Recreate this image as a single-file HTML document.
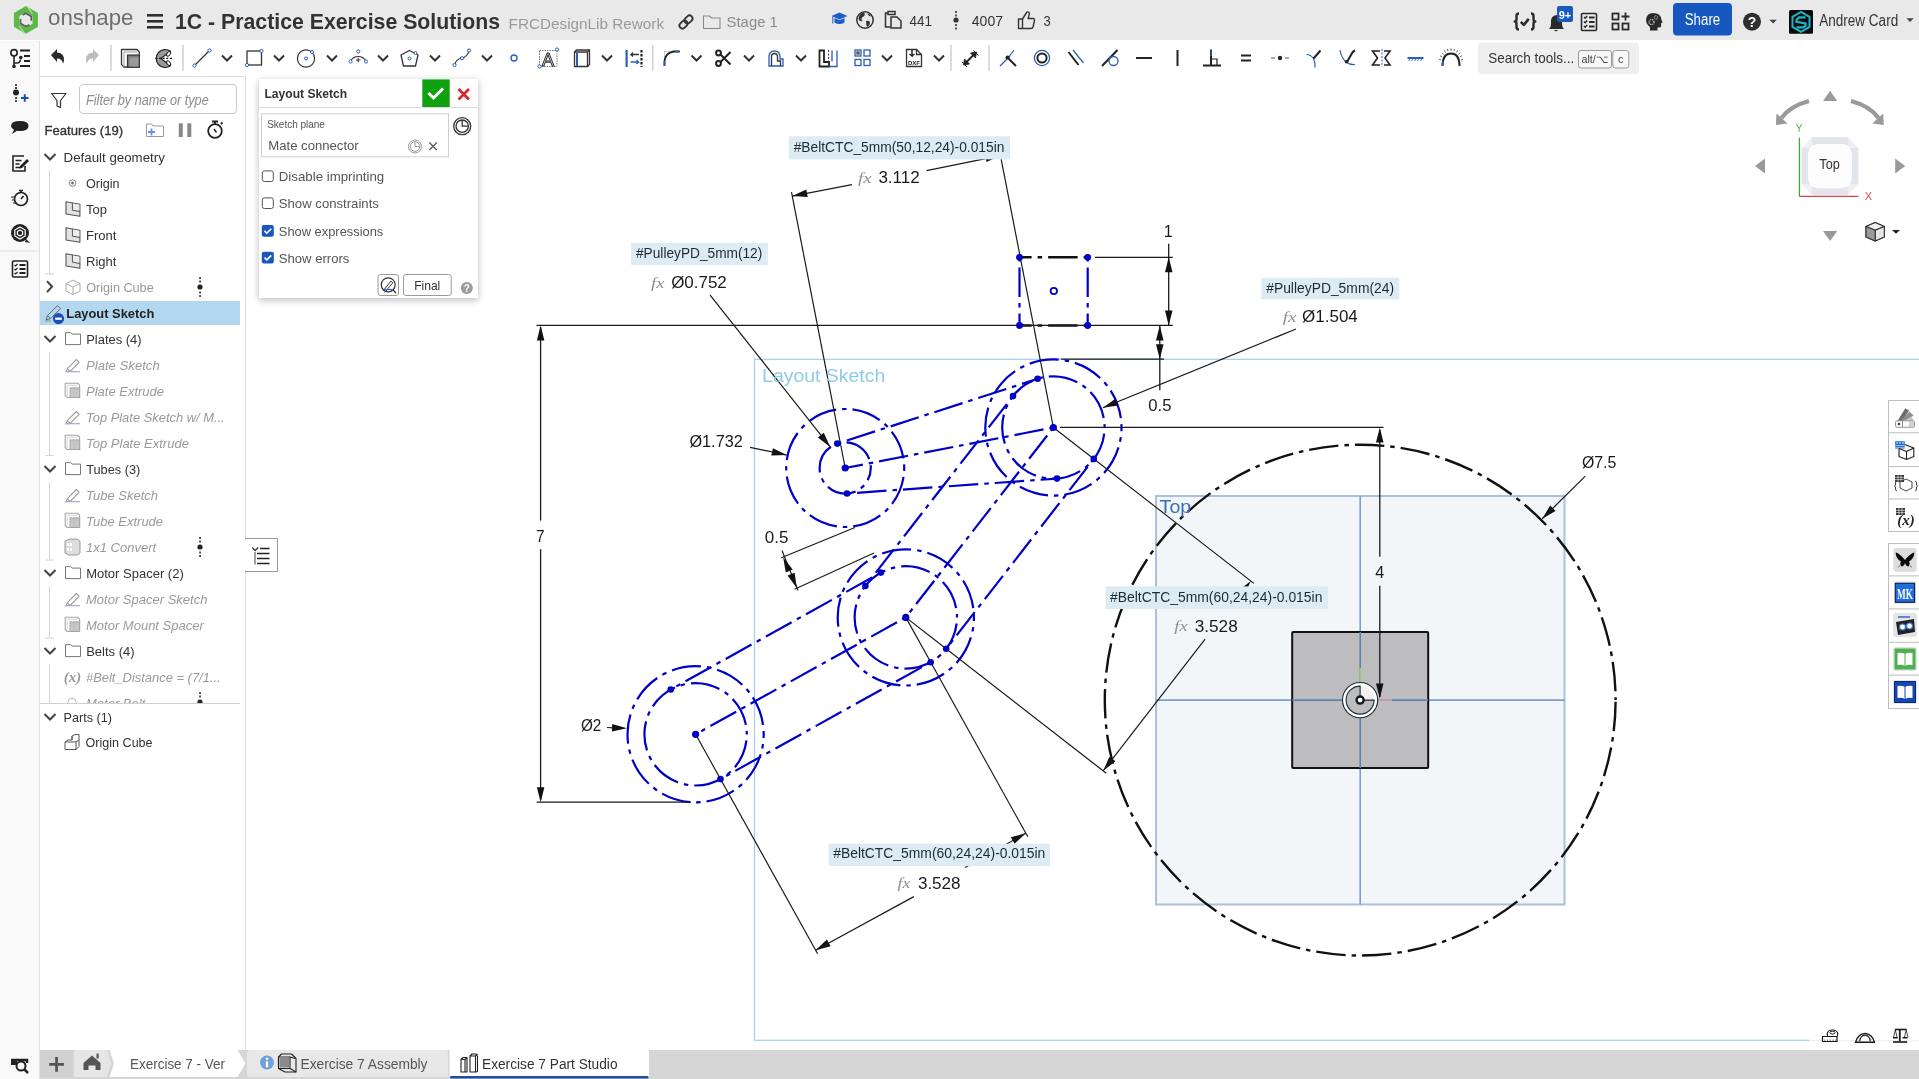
<!DOCTYPE html>
<html><head><meta charset="utf-8"><title>Onshape</title>
<style>
html,body{margin:0;padding:0;}
body{width:1919px;height:1079px;overflow:hidden;position:relative;background:#fff;font-family:"Liberation Sans",sans-serif;color:#333;}
#sketch{position:absolute;left:0;top:0;}
.abs{position:absolute;}
#header{position:absolute;left:0;top:0;width:1919px;height:40px;background:#e9e9e9;}
#toolbar{position:absolute;left:0;top:40px;width:1919px;height:36px;background:#fff;}
#leftstrip{position:absolute;left:0;top:41px;width:39px;height:1038px;background:#f9f9f9;border-right:1px solid #e0e0e0;}
#panel{position:absolute;left:40px;top:76px;width:205px;height:973px;background:#fff;border-right:1px solid #dcdcdc;border-top:1px solid #dcdcdc;}
#bottombar{position:absolute;left:40px;top:1050px;width:1879px;height:29px;background:#d6d6d6;}
.dimt{position:absolute;font-size:17px;color:#1a1a1a;line-height:1;white-space:nowrap;}
.expr{position:absolute;background:#dcebf4;color:#1e2a33;font-size:14px;line-height:23px;height:23px;border-radius:3px;white-space:nowrap;text-align:center;}
.fx{font-family:"Liberation Serif",serif;font-style:italic;color:#8a8a8a;font-size:15px;}
#overlay{position:absolute;left:0;top:0;pointer-events:none;will-change:transform;}
#sketch{will-change:transform;}

</style></head>
<body>
<svg id="sketch" width="1919" height="1079" viewBox="0 0 1919 1079">
<rect x="754.5" y="359.3" width="1200" height="681" fill="none" stroke="#9fd0ee" stroke-width="1.2"/>
<rect x="1156" y="496" width="408.5" height="408.5" fill="#f2f6f9" stroke="#a9c1dc" stroke-width="2"/>
<line x1="1360.2" y1="496" x2="1360.2" y2="904.5" stroke="#7f9fc8" stroke-width="1.6"/>
<line x1="1156" y1="700.1" x2="1564.5" y2="700.1" stroke="#7f9fc8" stroke-width="1.6"/>
<rect x="1292.2" y="632" width="136" height="136" fill="#bdbdbf" stroke="#111" stroke-width="2" rx="1"/>
<line x1="1360.2" y1="632" x2="1360.2" y2="768" stroke="#5c82b0" stroke-width="1.6"/>
<line x1="1292.2" y1="700.1" x2="1428.2" y2="700.1" stroke="#5c82b0" stroke-width="1.6"/>
<line x1="1360.2" y1="668" x2="1360.2" y2="684" stroke="#9ccc66" stroke-width="1.6"/>
<line x1="1377" y1="700.1" x2="1392" y2="700.1" stroke="#d9a0a8" stroke-width="1.6"/>
<circle cx="1360.1" cy="700.1" r="17.6" fill="#fff" stroke="#1e2a36" stroke-width="1.1"/>
<path d="M1360.1,686.1 A14,14 0 0 1 1374.1,700.1 L1360.1,700.1 Z" fill="#f2efef"/>
<path d="M1360.1,686.1 A14,14 0 1 0 1374.1,700.1 L1360.1,700.1 Z" fill="#bdbdbf" stroke="#1e2a36" stroke-width="1.1"/>
<circle cx="1360.1" cy="700.1" r="3.6" fill="#fff" stroke="#0d1620" stroke-width="2.3"/>
<circle cx="1360.2" cy="700.1" r="255.4" fill="none" stroke="#111" stroke-width="2.4" stroke-dasharray="29.5 6 4.5 6" stroke-dashoffset="44.3"/>
<circle cx="845.2" cy="468.0" r="25.6" fill="none" stroke="#0000c8" stroke-width="2.2" stroke-dasharray="29.5 6 4.5 6" stroke-dashoffset="16.72"/>
<circle cx="845.2" cy="468.0" r="59.0" fill="none" stroke="#0000c8" stroke-width="2.2" stroke-dasharray="29.5 6 4.5 6" stroke-dashoffset="37.05"/>
<circle cx="1053.4" cy="427.5" r="51.2" fill="none" stroke="#0000c8" stroke-width="2.2" stroke-dasharray="29.5 6 4.5 6" stroke-dashoffset="39.83"/>
<circle cx="1053.4" cy="427.5" r="68.1" fill="none" stroke="#0000c8" stroke-width="2.2" stroke-dasharray="29.5 6 4.5 6" stroke-dashoffset="25.72"/>
<circle cx="905.8" cy="617.4" r="51.2" fill="none" stroke="#0000c8" stroke-width="2.2" stroke-dasharray="29.5 6 4.5 6" stroke-dashoffset="39.83"/>
<circle cx="905.8" cy="617.4" r="68.1" fill="none" stroke="#0000c8" stroke-width="2.2" stroke-dasharray="29.5 6 4.5 6" stroke-dashoffset="25.72"/>
<circle cx="695.6" cy="734.3" r="51.2" fill="none" stroke="#0000c8" stroke-width="2.2" stroke-dasharray="29.5 6 4.5 6" stroke-dashoffset="39.83"/>
<circle cx="695.6" cy="734.3" r="68.1" fill="none" stroke="#0000c8" stroke-width="2.2" stroke-dasharray="29.5 6 4.5 6" stroke-dashoffset="25.72"/>
<line x1="1053.4" y1="427.5" x2="845.2" y2="468.0" stroke="#0000c8" stroke-width="2.2" stroke-dasharray="29.5 6 4.5 6" stroke-dashoffset="35.9"/>
<line x1="1053.4" y1="427.5" x2="905.8" y2="617.4" stroke="#0000c8" stroke-width="2.2" stroke-dasharray="29.5 6 4.5 6" stroke-dashoffset="35.9"/>
<line x1="905.8" y1="617.4" x2="695.6" y2="734.3" stroke="#0000c8" stroke-width="2.2" stroke-dasharray="29.5 6 4.5 6" stroke-dashoffset="35.9"/>
<line x1="847.0" y1="493.5" x2="1057.0" y2="478.6" stroke="#0000c8" stroke-width="2.2" stroke-dasharray="29.5 6 4.5 6" stroke-dashoffset="35.9"/>
<line x1="837.3" y1="443.6" x2="1037.6" y2="378.8" stroke="#0000c8" stroke-width="2.2" stroke-dasharray="29.5 6 4.5 6" stroke-dashoffset="35.9"/>
<line x1="1013.0" y1="396.1" x2="865.4" y2="586.0" stroke="#0000c8" stroke-width="2.2" stroke-dasharray="29.5 6 4.5 6" stroke-dashoffset="35.9"/>
<line x1="1093.8" y1="458.9" x2="946.2" y2="648.8" stroke="#0000c8" stroke-width="2.2" stroke-dasharray="29.5 6 4.5 6" stroke-dashoffset="35.9"/>
<line x1="880.9" y1="572.6" x2="670.7" y2="689.5" stroke="#0000c8" stroke-width="2.2" stroke-dasharray="29.5 6 4.5 6" stroke-dashoffset="35.9"/>
<line x1="930.7" y1="662.2" x2="720.5" y2="779.1" stroke="#0000c8" stroke-width="2.2" stroke-dasharray="29.5 6 4.5 6" stroke-dashoffset="35.9"/>
<line x1="1087.7" y1="257.3" x2="1019.5" y2="257.3" stroke="#111" stroke-width="2.4" stroke-dasharray="29.5 6 4.5 6" stroke-dashoffset="35.9"/>
<line x1="1087.7" y1="325.5" x2="1019.5" y2="325.5" stroke="#111" stroke-width="2.4" stroke-dasharray="29.5 6 4.5 6" stroke-dashoffset="35.9"/>
<line x1="1019.5" y1="257.3" x2="1019.5" y2="325.5" stroke="#0000c8" stroke-width="2.2" stroke-dasharray="29.5 6 4.5 6" stroke-dashoffset="35.9"/>
<line x1="1087.7" y1="257.3" x2="1087.7" y2="325.5" stroke="#0000c8" stroke-width="2.2" stroke-dasharray="29.5 6 4.5 6" stroke-dashoffset="35.9"/>
<circle cx="1053.8" cy="291" r="3.2" fill="none" stroke="#0000c8" stroke-width="1.8"/>
<line x1="536.5" y1="325.4" x2="1172.8" y2="325.4" stroke="#1a1a1a" stroke-width="1.3"/>
<line x1="1095.0" y1="257.3" x2="1172.8" y2="257.3" stroke="#1a1a1a" stroke-width="1.3"/>
<line x1="536.7" y1="802.2" x2="691.0" y2="802.2" stroke="#1a1a1a" stroke-width="1.3"/>
<line x1="1061.0" y1="359.2" x2="1164.0" y2="359.2" stroke="#1a1a1a" stroke-width="1.3"/>
<line x1="1060.0" y1="427.4" x2="1383.6" y2="427.4" stroke="#1a1a1a" stroke-width="1.3"/>
<line x1="540.6" y1="327.0" x2="540.6" y2="520.6" stroke="#1a1a1a" stroke-width="1.3"/>
<line x1="540.6" y1="549.2" x2="540.6" y2="800.0" stroke="#1a1a1a" stroke-width="1.3"/>
<polygon points="540.6,325.4 544.4,340.4 536.9,340.4" fill="#111"/>
<polygon points="540.6,802.2 536.9,787.2 544.4,787.2" fill="#111"/>
<line x1="1168.7" y1="243.7" x2="1168.7" y2="325.4" stroke="#1a1a1a" stroke-width="1.3"/>
<polygon points="1168.7,257.3 1172.5,272.3 1165.0,272.3" fill="#111"/>
<polygon points="1168.7,325.4 1165.0,310.4 1172.5,310.4" fill="#111"/>
<line x1="1159.8" y1="325.4" x2="1159.8" y2="390.2" stroke="#1a1a1a" stroke-width="1.3"/>
<polygon points="1159.8,325.4 1163.5,340.4 1156.0,340.4" fill="#111"/>
<polygon points="1159.8,359.2 1156.0,344.2 1163.5,344.2" fill="#111"/>
<line x1="1379.8" y1="430.0" x2="1379.8" y2="556.8" stroke="#1a1a1a" stroke-width="1.3"/>
<line x1="1379.8" y1="585.7" x2="1379.8" y2="697.0" stroke="#1a1a1a" stroke-width="1.3"/>
<polygon points="1379.8,427.4 1383.5,442.4 1376.0,442.4" fill="#111"/>
<polygon points="1379.8,698.5 1376.0,683.5 1383.5,683.5" fill="#111"/>
<line x1="845.2" y1="468.0" x2="791.5" y2="192.2" stroke="#1a1a1a" stroke-width="1.2"/>
<line x1="1053.4" y1="427.5" x2="999.7" y2="151.7" stroke="#1a1a1a" stroke-width="1.2"/>
<polygon points="792.3,196.1 806.3,189.6 807.7,196.9" fill="#111"/>
<polygon points="1000.5,155.6 986.5,162.1 985.1,154.8" fill="#111"/>
<line x1="792.3" y1="196.1" x2="852.0" y2="184.6" stroke="#1a1a1a" stroke-width="1.2"/>
<line x1="926.5" y1="170.6" x2="1000.5" y2="155.6" stroke="#1a1a1a" stroke-width="1.2"/>
<polygon points="830.2,446.9 817.9,437.5 823.8,432.8" fill="#111"/>
<line x1="710.1" y1="295.2" x2="830.2" y2="446.9" stroke="#1a1a1a" stroke-width="1.2"/>
<polygon points="786.8,455.1 771.3,455.6 772.9,448.3" fill="#111"/>
<line x1="750.1" y1="447.3" x2="786.8" y2="455.1" stroke="#1a1a1a" stroke-width="1.2"/>
<polygon points="1102.9,407.8 1115.4,398.7 1118.2,405.6" fill="#111"/>
<line x1="1296.0" y1="329.0" x2="1102.9" y2="407.8" stroke="#1a1a1a" stroke-width="1.2"/>
<polygon points="1542.2,518.8 1550.2,505.6 1555.5,510.9" fill="#111"/>
<line x1="1585.3" y1="476.1" x2="1542.2" y2="518.8" stroke="#1a1a1a" stroke-width="1.2"/>
<line x1="781.3" y1="557.8" x2="855.0" y2="527.5" stroke="#1a1a1a" stroke-width="1.2"/>
<line x1="794.5" y1="589.2" x2="874.0" y2="553.0" stroke="#1a1a1a" stroke-width="1.2"/>
<line x1="782.0" y1="550.5" x2="798.0" y2="590.5" stroke="#1a1a1a" stroke-width="1.2"/>
<polygon points="783.2,557.4 792.7,569.6 785.8,572.6" fill="#111"/>
<polygon points="796.8,588.0 787.6,575.6 794.6,572.7" fill="#111"/>
<line x1="1053.4" y1="427.5" x2="1253.9" y2="583.4" stroke="#1a1a1a" stroke-width="1.2"/>
<line x1="905.8" y1="617.4" x2="1106.3" y2="773.3" stroke="#1a1a1a" stroke-width="1.2"/>
<polygon points="1103.2,770.8 1109.4,756.7 1115.4,761.3" fill="#111"/>
<polygon points="1250.8,580.9 1244.5,595.1 1238.6,590.5" fill="#111"/>
<line x1="1103.2" y1="770.8" x2="1205.1" y2="639.2" stroke="#1a1a1a" stroke-width="1.2"/>
<line x1="905.8" y1="617.4" x2="1027.8" y2="836.8" stroke="#1a1a1a" stroke-width="1.2"/>
<line x1="695.6" y1="734.3" x2="817.6" y2="953.7" stroke="#1a1a1a" stroke-width="1.2"/>
<polygon points="815.6,950.2 826.9,939.6 830.6,946.2" fill="#111"/>
<polygon points="1025.8,833.3 1014.6,843.8 1010.9,837.3" fill="#111"/>
<line x1="815.6" y1="950.2" x2="913.8" y2="896.6" stroke="#1a1a1a" stroke-width="1.2"/>
<line x1="965.0" y1="867.4" x2="1025.8" y2="833.3" stroke="#1a1a1a" stroke-width="1.2"/>
<polygon points="627.0,728.3 611.9,731.4 612.2,724.0" fill="#111"/>
<line x1="607.0" y1="727.5" x2="614.0" y2="727.8" stroke="#1a1a1a" stroke-width="1.2"/>
<circle cx="847.0" cy="493.5" r="3.3" fill="#0000c8"/>
<circle cx="1057.0" cy="478.6" r="3.3" fill="#0000c8"/>
<circle cx="837.3" cy="443.6" r="3.3" fill="#0000c8"/>
<circle cx="1037.6" cy="378.8" r="3.3" fill="#0000c8"/>
<circle cx="1013.0" cy="396.1" r="3.3" fill="#0000c8"/>
<circle cx="865.4" cy="586.0" r="3.3" fill="#0000c8"/>
<circle cx="1093.8" cy="458.9" r="3.3" fill="#0000c8"/>
<circle cx="946.2" cy="648.8" r="3.3" fill="#0000c8"/>
<circle cx="880.9" cy="572.6" r="3.3" fill="#0000c8"/>
<circle cx="670.7" cy="689.5" r="3.3" fill="#0000c8"/>
<circle cx="930.7" cy="662.2" r="3.3" fill="#0000c8"/>
<circle cx="720.5" cy="779.1" r="3.3" fill="#0000c8"/>
<circle cx="845.2" cy="468.0" r="3.6" fill="#0000c8"/>
<circle cx="1053.4" cy="427.5" r="3.6" fill="#0000c8"/>
<circle cx="905.8" cy="617.4" r="3.6" fill="#0000c8"/>
<circle cx="695.6" cy="734.3" r="3.6" fill="#0000c8"/>
<circle cx="1019.5" cy="257.3" r="3.4" fill="#0000c8"/>
<circle cx="1087.7" cy="257.3" r="3.4" fill="#0000c8"/>
<circle cx="1019.5" cy="325.5" r="3.4" fill="#0000c8"/>
<circle cx="1087.7" cy="325.5" r="3.4" fill="#0000c8"/>
<text x="762.1" y="381.5" font-family="Liberation Sans, sans-serif" font-size="17.5" fill="#8fcbea" font-style="normal" font-weight="normal" text-anchor="start" textLength="123.2" lengthAdjust="spacingAndGlyphs">Layout Sketch</text>
<text x="1159.6" y="513.4" font-family="Liberation Sans, sans-serif" font-size="18" fill="#3a6db5" font-style="normal" font-weight="normal" text-anchor="start" textLength="31.6" lengthAdjust="spacingAndGlyphs">Top</text>
<rect x="789" y="136.3" width="221.0" height="23.1" fill="#dcebf4"/>
<text x="793.7" y="151.6" font-family="Liberation Sans, sans-serif" font-size="14" fill="#1e2a33" font-style="normal" font-weight="normal" text-anchor="start" textLength="210.7" lengthAdjust="spacingAndGlyphs">#BeltCTC_5mm(50,12,24)-0.015in</text>
<text x="858" y="182.5" font-family="Liberation Serif, sans-serif" font-size="15" fill="#8f8f8f" font-style="italic" font-weight="normal" text-anchor="start" textLength="13.6" lengthAdjust="spacingAndGlyphs">fx</text>
<text x="878.4" y="182.8" font-family="Liberation Sans, sans-serif" font-size="16" fill="#1a1a1a" font-style="normal" font-weight="normal" text-anchor="start" textLength="41.3" lengthAdjust="spacingAndGlyphs">3.112</text>
<rect x="631.1" y="242.9" width="136.8" height="22.2" fill="#dcebf4"/>
<text x="636" y="257.8" font-family="Liberation Sans, sans-serif" font-size="14" fill="#1e2a33" font-style="normal" font-weight="normal" text-anchor="start" textLength="126.3" lengthAdjust="spacingAndGlyphs">#PulleyPD_5mm(12)</text>
<text x="651" y="287.5" font-family="Liberation Serif, sans-serif" font-size="15" fill="#8f8f8f" font-style="italic" font-weight="normal" text-anchor="start" textLength="13.5" lengthAdjust="spacingAndGlyphs">fx</text>
<text x="671.2" y="288.3" font-family="Liberation Sans, sans-serif" font-size="16" fill="#1a1a1a" font-style="normal" font-weight="normal" text-anchor="start" textLength="55.6" lengthAdjust="spacingAndGlyphs">Ø0.752</text>
<text x="689.4" y="446.9" font-family="Liberation Sans, sans-serif" font-size="16" fill="#1a1a1a" font-style="normal" font-weight="normal" text-anchor="start" textLength="53.4" lengthAdjust="spacingAndGlyphs">Ø1.732</text>
<text x="1168.3" y="237" font-family="Liberation Sans, sans-serif" font-size="16" fill="#1a1a1a" font-style="normal" font-weight="normal" text-anchor="middle">1</text>
<text x="1148.3" y="410.5" font-family="Liberation Sans, sans-serif" font-size="16" fill="#1a1a1a" font-style="normal" font-weight="normal" text-anchor="start" textLength="23.2" lengthAdjust="spacingAndGlyphs">0.5</text>
<text x="536.1" y="541.7" font-family="Liberation Sans, sans-serif" font-size="16" fill="#1a1a1a" font-style="normal" font-weight="normal" text-anchor="start" textLength="8.6" lengthAdjust="spacingAndGlyphs">7</text>
<text x="764.8" y="543" font-family="Liberation Sans, sans-serif" font-size="16" fill="#1a1a1a" font-style="normal" font-weight="normal" text-anchor="start" textLength="23.7" lengthAdjust="spacingAndGlyphs">0.5</text>
<rect x="1261.3" y="277.8" width="138.0" height="21.5" fill="#dcebf4"/>
<text x="1266.2" y="292.6" font-family="Liberation Sans, sans-serif" font-size="14" fill="#1e2a33" font-style="normal" font-weight="normal" text-anchor="start" textLength="127.9" lengthAdjust="spacingAndGlyphs">#PulleyPD_5mm(24)</text>
<text x="1282.8" y="321.5" font-family="Liberation Serif, sans-serif" font-size="15" fill="#8f8f8f" font-style="italic" font-weight="normal" text-anchor="start" textLength="13.8" lengthAdjust="spacingAndGlyphs">fx</text>
<text x="1302.1" y="322.3" font-family="Liberation Sans, sans-serif" font-size="16" fill="#1a1a1a" font-style="normal" font-weight="normal" text-anchor="start" textLength="55.7" lengthAdjust="spacingAndGlyphs">Ø1.504</text>
<text x="1375.3" y="578.4" font-family="Liberation Sans, sans-serif" font-size="16" fill="#1a1a1a" font-style="normal" font-weight="normal" text-anchor="start" textLength="9" lengthAdjust="spacingAndGlyphs">4</text>
<text x="1581.9" y="467.8" font-family="Liberation Sans, sans-serif" font-size="16" fill="#1a1a1a" font-style="normal" font-weight="normal" text-anchor="start" textLength="34.5" lengthAdjust="spacingAndGlyphs">Ø7.5</text>
<text x="580.9" y="730.8" font-family="Liberation Sans, sans-serif" font-size="16" fill="#1a1a1a" font-style="normal" font-weight="normal" text-anchor="start" textLength="20.4" lengthAdjust="spacingAndGlyphs">Ø2</text>
<rect x="1105.6" y="586.4" width="222.4" height="22.6" fill="#dcebf4"/>
<text x="1110" y="601.8" font-family="Liberation Sans, sans-serif" font-size="14" fill="#1e2a33" font-style="normal" font-weight="normal" text-anchor="start" textLength="212.4" lengthAdjust="spacingAndGlyphs">#BeltCTC_5mm(60,24,24)-0.015in</text>
<text x="1174.3" y="630.8" font-family="Liberation Serif, sans-serif" font-size="15" fill="#8f8f8f" font-style="italic" font-weight="normal" text-anchor="start" textLength="13.3" lengthAdjust="spacingAndGlyphs">fx</text>
<text x="1194.8" y="631.5" font-family="Liberation Sans, sans-serif" font-size="16" fill="#1a1a1a" font-style="normal" font-weight="normal" text-anchor="start" textLength="42.9" lengthAdjust="spacingAndGlyphs">3.528</text>
<rect x="828.5" y="843.7" width="221.5" height="22.4" fill="#dcebf4"/>
<text x="833.2" y="858.2" font-family="Liberation Sans, sans-serif" font-size="14" fill="#1e2a33" font-style="normal" font-weight="normal" text-anchor="start" textLength="212.1" lengthAdjust="spacingAndGlyphs">#BeltCTC_5mm(60,24,24)-0.015in</text>
<text x="897.6" y="888.4" font-family="Liberation Serif, sans-serif" font-size="15" fill="#8f8f8f" font-style="italic" font-weight="normal" text-anchor="start" textLength="12.8" lengthAdjust="spacingAndGlyphs">fx</text>
<text x="917.9" y="889.1" font-family="Liberation Sans, sans-serif" font-size="16" fill="#1a1a1a" font-style="normal" font-weight="normal" text-anchor="start" textLength="42.7" lengthAdjust="spacingAndGlyphs">3.528</text>
</svg>
<div id="header"></div>
<div id="toolbar"></div>
<div id="leftstrip"></div>
<div id="panel"></div>
<div id="bottombar"></div>

<div style="position:absolute;left:258.5px;top:79.4px;width:219.3px;height:218.8px;background:#fff;box-shadow:0 2px 7px rgba(0,0,0,0.28);"></div>
<div style="position:absolute;left:1888px;top:400px;width:31px;height:132px;background:#fff;border:1px solid #bdbdbd;border-right:none;box-sizing:border-box;"></div>
<div style="position:absolute;left:1888px;top:543px;width:31px;height:166px;background:#fff;border:1px solid #bdbdbd;border-right:none;box-sizing:border-box;"></div>
<svg id="overlay" width="1919" height="1079" viewBox="0 0 1919 1079">
<g transform="translate(25.9,19.9)">
<polygon points="0,-13.8 12,-6.9 12,6.9 0,13.8 -12,6.9 -12,-6.9" fill="#5db847"/>
<polygon points="0,-7.6 6.6,-3.8 6.6,3.8 0,7.6 -6.6,3.8 -6.6,-3.8" fill="#e9e9e9"/>
<path d="M1.5,-13.5 L6.5,-6.2 M-1.5,13.5 L-6.5,6.2" stroke="#b8e0a8" stroke-width="1.1"/>
<path d="M-3.2,-4.9 L0,-6.6 L5.4,-3.5 L5.4,0.8 M3.5,4.9 L0,6.6 L-5.4,3.5 L-5.4,-0.8" fill="none" stroke="#5a5a5a" stroke-width="1.7"/>
</g>
<text x="48" y="25.3" font-family="Liberation Sans, sans-serif" font-size="22" fill="#6e6e6e" font-weight="normal" font-style="normal" text-anchor="start" textLength="85.5" lengthAdjust="spacingAndGlyphs" >onshape</text>
<g fill="#2e2e2e"><rect x="147" y="14" width="16" height="2.6"/><rect x="147" y="20" width="16" height="2.6"/><rect x="147" y="26" width="16" height="2.6"/></g>
<text x="175" y="29.1" font-family="Liberation Sans, sans-serif" font-size="22" fill="#333" font-weight="bold" font-style="normal" text-anchor="start" textLength="325" lengthAdjust="spacingAndGlyphs" >1C - Practice Exercise Solutions</text>
<text x="508.6" y="28.9" font-family="Liberation Sans, sans-serif" font-size="15" fill="#9a9a9a" font-weight="normal" font-style="normal" text-anchor="start" textLength="155.5" lengthAdjust="spacingAndGlyphs" >FRCDesignLib Rework</text>
<g transform="translate(686,22) rotate(-45)" fill="none" stroke="#333" stroke-width="1.8"><rect x="-8" y="-3" width="9" height="6" rx="3"/><rect x="-1" y="-3" width="9" height="6" rx="3"/></g>
<path d="M703.5,16 h6 l2,2 h8.5 v10.5 h-16.5 z" fill="none" stroke="#8a8a8a" stroke-width="1.1"/>
<text x="726.6" y="27.3" font-family="Liberation Sans, sans-serif" font-size="15" fill="#8a8a8a" font-weight="normal" font-style="normal" text-anchor="start" textLength="51.2" lengthAdjust="spacingAndGlyphs" >Stage 1</text>
<g fill="#1a5fc9"><polygon points="831.5,16 839.5,12.5 847.5,16 839.5,19.5"/><path d="M834.5,18 v4.5 q5,3 10,0 v-4.5 l-5,2.2 z"/><rect x="832.3" y="16.5" width="1" height="7"/></g>
<g><circle cx="865" cy="20" r="8.2" fill="none" stroke="#333" stroke-width="1.5"/><path d="M859.5,15 q3,-3 5,-2 q1,3 -2,4 q-2,2 0,4 q-3,1 -4,-2 z M866,21 q3,-1 4,1 q0,4 -3,5 q-1,-3 -1,-6 z M867,13.5 q3,0 4,3 q-2,0 -4,-3z" fill="#333"/></g>
<g fill="none" stroke="#333" stroke-width="1.5"><path d="M889,13 h-3.5 v14 h5"/><rect x="888" y="11.5" width="7" height="3" fill="#e9e9e9"/><path d="M891,17 h6 l4,4 v7 h-10 z"/></g>
<text x="909.6" y="26.2" font-family="Liberation Sans, sans-serif" font-size="15" fill="#333" font-weight="normal" font-style="normal" text-anchor="start" textLength="22.4" lengthAdjust="spacingAndGlyphs" >441</text>
<g fill="#333"><circle cx="956" cy="20" r="2.6"/><rect x="955.2" y="11" width="1.6" height="2"/><rect x="955.2" y="14.5" width="1.6" height="2"/><rect x="955.2" y="24" width="1.6" height="2"/><rect x="955.2" y="27.5" width="1.6" height="2"/></g>
<text x="971.8" y="26.2" font-family="Liberation Sans, sans-serif" font-size="15" fill="#333" font-weight="normal" font-style="normal" text-anchor="start" textLength="31.2" lengthAdjust="spacingAndGlyphs" >4007</text>
<path d="M1018.5,19 h4 v9.5 h-4 z M1022.5,19 l3.5,-5.5 q1,-2.5 2.8,-1.2 q1,1 0,4 l-0.8,2.2 h5 q1.8,0.2 1.5,2 l-1.5,6.5 q-0.5,1.5 -2,1.5 h-8.5" fill="none" stroke="#333" stroke-width="1.4" stroke-linejoin="round"/>
<text x="1043.4" y="26.2" font-family="Liberation Sans, sans-serif" font-size="15" fill="#333" font-weight="normal" font-style="normal" text-anchor="start" textLength="7.2" lengthAdjust="spacingAndGlyphs" >3</text>
<g fill="none" stroke="#2a2a2a" stroke-width="2.4" stroke-linejoin="round"><path d="M1519,13.5 q-2.5,0 -2.5,2.5 v3.5 q0,1.8 -1.8,2 q1.8,0.2 1.8,2 v3.5 q0,2.5 2.5,2.5"/><path d="M1531,13.5 q2.5,0 2.5,2.5 v3.5 q0,1.8 1.8,2 q-1.8,0.2 -1.8,2 v3.5 q0,2.5 -2.5,2.5"/><path d="M1520.8,21.8 l3,3 l5,-6" stroke-width="2.6"/></g>
<path d="M1549,29 q2,-1.5 2,-5 v-3 q0,-5 5.5,-6 q5.5,1 5.5,6 v3 q0,3.5 2,5 z M1554,30 q2,2.5 4,0z" fill="#2a2a2a"/>
<rect x="1557" y="6" width="16" height="16" rx="2" fill="#1a5bc0"/>
<text x="1565" y="18.5" font-family="Liberation Sans, sans-serif" font-size="11" fill="#fff" font-weight="bold" font-style="normal" text-anchor="middle" >9+</text>
<g fill="none" stroke="#2a2a2a" stroke-width="1.6"><rect x="1581.5" y="13.5" width="15" height="17" rx="1"/></g><g stroke="#2a2a2a" stroke-width="1.5" fill="none"><path d="M1584,17 l1.2,1.2 l2,-2.2 M1584,21.5 l1.2,1.2 l2,-2.2 M1584,26 l1.2,1.2 l2,-2.2"/><path d="M1589,17.5 h5.5 M1589,22 h5.5 M1589,26.5 h5.5" stroke-width="2"/></g>
<g fill="none" stroke="#2a2a2a" stroke-width="1.8"><rect x="1612.5" y="13.5" width="6" height="6"/><rect x="1612.5" y="23.5" width="6" height="6"/><rect x="1622.5" y="23.5" width="6" height="6"/><path d="M1625.5,12.5 v8 M1621.5,16.5 h8"/></g>
<path d="M1653,13 q8,0 8.5,7 l1.2,2.5 l-1.6,0.5 v3 q0,1.5 -2,1.5 h-1.6 v3 h-7.5 v-3.5 q-4,-3 -4,-7 q0.5,-7 7,-7z" fill="#2a2a2a"/><circle cx="1651.5" cy="22" r="2.5" fill="none" stroke="#ccc" stroke-width="1.2" stroke-dasharray="1.2 0.8"/><circle cx="1656" cy="17.5" r="1.8" fill="none" stroke="#ccc" stroke-width="1" stroke-dasharray="1 0.7"/>
<rect x="1673" y="3" width="59" height="32.6" rx="4" fill="#1658c0"/>
<text x="1702.5" y="25.3" font-family="Liberation Sans, sans-serif" font-size="16" fill="#fff" font-weight="normal" font-style="normal" text-anchor="middle" textLength="35.5" lengthAdjust="spacingAndGlyphs" >Share</text>
<circle cx="1752" cy="21.7" r="9" fill="#2e2e2e"/>
<text x="1752" y="27" font-family="Liberation Sans, sans-serif" font-size="14" fill="#fff" font-weight="bold" font-style="normal" text-anchor="middle" >?</text>
<polygon points="1769.4,19.7 1776.8,19.7 1773.1,23.6" fill="#444"/>
<rect x="1789" y="10" width="24" height="23.8" rx="1.5" fill="#0b0b0b"/><g transform="translate(1801,21.9)"><polygon points="0,-10 8.5,-5 8.5,5 0,10 -8.5,5 -8.5,-5" fill="none" stroke="#1fb3c7" stroke-width="2"/><path d="M4.5,-4.5 L-2,-4.5 L-4.5,-2 L-4.5,0 L4.5,1.5 L4.5,4 L2,5.5 L-4.5,5.5" fill="none" stroke="#1fb3c7" stroke-width="2.2"/></g>
<text x="1819.2" y="25.8" font-family="Liberation Sans, sans-serif" font-size="16" fill="#333" font-weight="normal" font-style="normal" text-anchor="start" textLength="79" lengthAdjust="spacingAndGlyphs" >Andrew Card</text>
<polygon points="1906.4,18.2 1913.7,18.2 1910,21.9" fill="#444"/>
<g fill="none" stroke="#222" stroke-width="1.6"><circle cx="14" cy="52.8" r="3.2"/><path d="M14,56 v11"/><path d="M14,63 h3 q3,0 3.5,-3.5"/></g><circle cx="14" cy="66.5" r="1.8" fill="#222"/><circle cx="20.8" cy="57.5" r="1.8" fill="#222"/><g stroke="#222" stroke-width="2.2"><path d="M20,50.5 h10 M24,56 h6 M24,61 h6 M20,66 h10"/></g>
<path d="M51,55 l6,-6 v3.5 q7,0 7,7.5 q0,2 -1,3.5 q-1,-5 -6,-5 v3.5 z" fill="#2b2b2b"/>
<path d="M99,55 l-6,-6 v3.5 q-7,0 -7,7.5 q0,2 1,3.5 q1,-5 6,-5 v3.5 z" fill="#bdbdbd"/>
<line x1="111" y1="45" x2="111" y2="71" stroke="#cfcfcf" stroke-width="1.5"/>
<path d="M121.5,49.5 H137 L139.3,52 V67 H124 L121.5,64.6 Z" fill="#fff" stroke="#333" stroke-width="1.3" stroke-linejoin="round"/><path d="M124,52 H137 M124,52 V67" stroke="#999" stroke-width="1" fill="none"/><rect x="127.5" y="55" width="11.8" height="12" fill="#7d7d7d" stroke="#333" stroke-width="1.2"/><rect x="129.5" y="57.5" width="9" height="9" fill="#9a9a9a"/>
<path d="M170.5,51.2 A9,9 0 1 0 170.5,65.8 L160.8,58.5 Z" fill="#9a9a9a" stroke="#222" stroke-width="1.2" stroke-linejoin="round"/><ellipse cx="168.6" cy="53.9" rx="2.6" ry="1.6" transform="rotate(-55 168.6 53.9)" fill="#fff" stroke="#222" stroke-width="1"/><ellipse cx="168.6" cy="63.1" rx="2.6" ry="1.6" transform="rotate(55 168.6 63.1)" fill="#fff" stroke="#222" stroke-width="1"/><path d="M155.5,58.4 H173" stroke="#111" stroke-width="1.1" stroke-dasharray="2 1.6"/>
<line x1="183" y1="45" x2="183" y2="71" stroke="#cfcfcf" stroke-width="1.5"/>
<line x1="195" y1="65" x2="209" y2="51" stroke="#333" stroke-width="1.3"/><circle cx="194.5" cy="65.5" r="1.6" fill="#fff" stroke="#2c5fb3" stroke-width="1"/><circle cx="209.5" cy="50.5" r="1.6" fill="#fff" stroke="#2c5fb3" stroke-width="1"/>
<path d="M222,55.5 l5,5 l5,-5" fill="none" stroke="#333" stroke-width="2"/>
<rect x="247" y="51" width="14.5" height="14" fill="none" stroke="#333" stroke-width="1.3"/><circle cx="247" cy="65" r="1.6" fill="#fff" stroke="#2c5fb3" stroke-width="1"/><circle cx="261.5" cy="51" r="1.6" fill="#fff" stroke="#2c5fb3" stroke-width="1"/>
<path d="M274,55.5 l5,5 l5,-5" fill="none" stroke="#333" stroke-width="2"/>
<circle cx="306" cy="58.5" r="8.6" fill="none" stroke="#333" stroke-width="1.2"/><circle cx="306" cy="58.5" r="1.5" fill="none" stroke="#2c5fb3" stroke-width="1"/><circle cx="312" cy="52" r="1.5" fill="#fff" stroke="#2c5fb3" stroke-width="1"/>
<path d="M327,55.5 l5,5 l5,-5" fill="none" stroke="#333" stroke-width="2"/>
<path d="M350.5,61.5 A8.5,8.5 0 0 1 366,61.5" fill="none" stroke="#333" stroke-width="1.2"/><circle cx="350.5" cy="61.5" r="1.6" fill="#fff" stroke="#2c5fb3"/><circle cx="366" cy="61.5" r="1.6" fill="#fff" stroke="#2c5fb3"/><circle cx="358.3" cy="51.5" r="1.6" fill="#fff" stroke="#2c5fb3"/><path d="M356,60 h4.5 M358.2,57.8 v4.5" stroke="#333" stroke-width="1"/>
<path d="M378,55.5 l5,5 l5,-5" fill="none" stroke="#333" stroke-width="2"/>
<polygon points="409.5,50.5 418,55 415.5,66 403.5,66 401,55" fill="none" stroke="#333" stroke-width="1.3"/><circle cx="409.5" cy="58.5" r="1.5" fill="none" stroke="#2c5fb3"/><circle cx="415.5" cy="53" r="1.5" fill="#fff" stroke="#2c5fb3"/>
<path d="M430,55.5 l5,5 l5,-5" fill="none" stroke="#333" stroke-width="2"/>
<path d="M454.5,65 q2,-6 6,-6.5 q4,-0.5 6,-3 q2,-2.5 3,-5" fill="none" stroke="#333" stroke-width="1.2"/><circle cx="454.5" cy="65" r="1.6" fill="#fff" stroke="#2c5fb3"/><circle cx="462" cy="58.2" r="1.6" fill="#fff" stroke="#2c5fb3"/><circle cx="469" cy="50.5" r="1.6" fill="#fff" stroke="#2c5fb3"/>
<path d="M482,55.5 l5,5 l5,-5" fill="none" stroke="#333" stroke-width="2"/>
<circle cx="514" cy="58" r="3" fill="none" stroke="#2c5fb3" stroke-width="1.4"/>
<rect x="539.5" y="50.5" width="17.5" height="16" fill="none" stroke="#555" stroke-width="0.8" stroke-dasharray="1.5 1"/><text x="548" y="65.5" font-family="Liberation Sans" font-size="18" fill="#fff" stroke="#333" stroke-width="1" text-anchor="middle">A</text><circle cx="539.5" cy="66.5" r="1.6" fill="#fff" stroke="#2c5fb3"/><circle cx="557" cy="49.5" r="1.6" fill="#fff" stroke="#2c5fb3"/>
<g fill="none" stroke="#333" stroke-width="1.3"><path d="M574.5,52 l2,-2 h13 v14.5 l-2,2 h-13 z"/><path d="M574.5,52 h13 v14.5 M587.5,52 l2,-2"/></g><line x1="577" y1="53" x2="577" y2="66" stroke="#2c5fb3" stroke-width="2"/>
<path d="M602,55.5 l5,5 l5,-5" fill="none" stroke="#333" stroke-width="2"/>
<g><rect x="625.5" y="50" width="2.2" height="17" fill="#2c5fb3"/><path d="M641.5,50 v17" stroke="#222" stroke-width="2.2" stroke-dasharray="2.5 1.5"/><path d="M639,54.5 h-8 l2,-2 M631,54.5 l2,2" stroke="#333" stroke-width="1.3" fill="none"/><path d="M630.5,62 h8 l-2,-2 M638.5,62 l-2,2" stroke="#2c5fb3" stroke-width="1.3" fill="none"/></g>
<line x1="652.7" y1="45" x2="652.7" y2="71" stroke="#cfcfcf" stroke-width="1.5"/>
<path d="M664.5,66 v-5 q1,-8 9,-9.5 h6" fill="none" stroke="#222" stroke-width="1.8"/><path d="M664.5,66 v-5" stroke="#2c5fb3" stroke-width="1.6"/><path d="M675,51.5 h5" stroke="#2c5fb3" stroke-width="1.6"/><path d="M664.5,51.5 h6 M664.5,51.5 v6" stroke="#777" stroke-width="0.7" stroke-dasharray="1 1"/>
<path d="M691.5,55.5 l5,5 l5,-5" fill="none" stroke="#333" stroke-width="2"/>
<g fill="none" stroke="#222" stroke-width="2"><circle cx="718.5" cy="53" r="2.4"/><circle cx="718.5" cy="63.5" r="2.4"/><path d="M720.5,54.5 l10,10 M720.5,62 l10,-10"/></g>
<path d="M744,55.5 l5,5 l5,-5" fill="none" stroke="#333" stroke-width="2"/>
<g fill="none" stroke-width="1.3"><path d="M769,66 v-9 q0,-6 5.5,-6 q5.5,0 5.5,6 v2 h3 v7 z" stroke="#2c5fb3"/><path d="M771.5,66 v-9 q0,-3.5 3,-3.5 q3,0 3,3.5 v4 h3 v5" stroke="#333"/></g>
<path d="M796,55.5 l5,5 l5,-5" fill="none" stroke="#333" stroke-width="2"/>
<g><path d="M819.5,50.5 h4.5 v11.5 h5 v4.5 h-9.5 z" fill="none" stroke="#222" stroke-width="1.8"/><path d="M837,50.5 v16 h-8 M832,50.5 v11" fill="none" stroke="#2c5fb3" stroke-width="1.3"/><path d="M828.5,50 v17" stroke="#444" stroke-width="1" stroke-dasharray="2 1.5"/></g>
<g fill="none" stroke="#2c5fb3" stroke-width="1.3"><rect x="855" y="50" width="6" height="6"/><rect x="864" y="50" width="6" height="6"/><rect x="855" y="59.5" width="6" height="6"/><rect x="864" y="59.5" width="6" height="6"/></g><rect x="856.3" y="51.3" width="3.4" height="3.4" fill="#555"/>
<path d="M882,55.5 l5,5 l5,-5" fill="none" stroke="#333" stroke-width="2"/>
<g fill="none" stroke="#333" stroke-width="1.3"><path d="M906.5,49.5 h10 l5,5 v12 h-15 z M916.5,49.5 v5 h5"/></g><path d="M912,50 v6 l-2.5,-2 M912,56 l2.5,-2" stroke="#222" stroke-width="1.5" fill="none"/><text x="914" y="65" font-family="Liberation Sans" font-size="6" font-weight="bold" fill="#222" text-anchor="middle">DXF</text>
<path d="M934,55.5 l5,5 l5,-5" fill="none" stroke="#333" stroke-width="2"/>
<line x1="951" y1="45" x2="951" y2="71" stroke="#cfcfcf" stroke-width="1.5"/>
<g stroke="#222" fill="none"><path d="M964.5,64 l11,-11" stroke-width="1.8"/><path d="M963.5,65 l1,-6 l5,5 z M976.5,52 l-6,1 l5,5 z" fill="#222" stroke-width="0.8"/><path d="M962,62 l5,5 M973.5,50.5 l5,5" stroke-width="1"/></g>
<line x1="989" y1="45" x2="989" y2="71" stroke="#cfcfcf" stroke-width="1.5"/>
<g><line x1="1000" y1="66" x2="1010" y2="56" stroke="#2c5fb3" stroke-width="1.2"/><line x1="1008" y1="58" x2="1016" y2="66" stroke="#222" stroke-width="2"/><line x1="1008" y1="58" x2="1014" y2="50" stroke="#2c5fb3" stroke-width="1.2"/><circle cx="1007.5" cy="57.5" r="2" fill="#222"/></g>
<circle cx="1042" cy="58" r="7.6" fill="none" stroke="#2c5fb3" stroke-width="1.3"/><circle cx="1042" cy="58" r="4.6" fill="none" stroke="#222" stroke-width="2"/>
<line x1="1068.5" y1="52" x2="1078.5" y2="65" stroke="#222" stroke-width="2"/><line x1="1073" y1="50" x2="1083.5" y2="63" stroke="#2c5fb3" stroke-width="1.2"/>
<line x1="1102" y1="66" x2="1117.5" y2="50" stroke="#222" stroke-width="2"/><circle cx="1113.5" cy="61" r="4.5" fill="none" stroke="#2c5fb3" stroke-width="1.3"/>
<line x1="1136" y1="58" x2="1152" y2="58" stroke="#222" stroke-width="2"/>
<line x1="1177.5" y1="50" x2="1177.5" y2="66" stroke="#222" stroke-width="2"/>
<path d="M1203,65.5 h18 M1211,65.5 v-16" stroke="#222" stroke-width="2" fill="none"/><path d="M1211,59 h6 v6" stroke="#222" stroke-width="1.2" fill="none"/><path d="M1211,50 v6" stroke="#2c5fb3" stroke-width="1.4"/>
<path d="M1241,55.5 h10 M1241,60.5 h10" stroke="#222" stroke-width="2"/>
<path d="M1271,58 h4 M1285,58 h4" stroke="#2c5fb3" stroke-width="1.2"/><circle cx="1280" cy="58" r="2.2" fill="#222"/>
<path d="M1306.5,54.5 q4,0 7,4 M1313.5,58.5 q2,5 1.5,9" stroke="#2c5fb3" stroke-width="1.2" fill="none"/><path d="M1313.5,58.5 l7,-8" stroke="#222" stroke-width="2"/>
<path d="M1340,50 q1.5,8 6,12 q4,3 9,2.5" stroke="#2c5fb3" stroke-width="1.2" fill="none"/><path d="M1347,62 l4,-7 q2,-4 4,-4.5" stroke="#222" stroke-width="2" fill="none"/><circle cx="1346.5" cy="61.8" r="1.8" fill="#222"/>
<path d="M1380,51 h-7.5 l5,7 l-5,7 h7.5" stroke="#222" stroke-width="1.6" fill="none"/><path d="M1384,51 h6 l-5,7 l5,7 h-6" stroke="#222" stroke-width="1.6" fill="none"/><line x1="1382" y1="49" x2="1382" y2="67" stroke="#2c5fb3" stroke-width="1" stroke-dasharray="2 1.5"/>
<path d="M1407.5,58 h16" stroke="#2c5fb3" stroke-width="2"/><path d="M1408.5,61 l2,-2.5 M1411.5,61 l2,-2.5 M1414.5,61 l2,-2.5 M1417.5,61 l2,-2.5 M1420.5,61 l2,-2.5" stroke="#2c5fb3" stroke-width="0.9"/>
<path d="M1442.5,66 q0,-12.5 8.5,-12.5 q8.5,0 8.5,12.5" stroke="#222" stroke-width="1.9" fill="none"/><path d="M1442.5,66 q0,-3 0.8,-5" stroke="#2c5fb3" stroke-width="1.9" fill="none"/><g stroke="#444" stroke-width="0.8"><path d="M1441,60 l-2,-0.8 M1442,57 l-2,-1.4 M1443.5,54.5 l-1.6,-1.8 M1445.5,52.5 l-1.2,-2.2 M1448,51.2 l-0.6,-2.4 M1451,50.8 v-2.5 M1454,51.2 l0.6,-2.4 M1456.5,52.5 l1.2,-2.2 M1458.5,54.5 l1.6,-1.8 M1460,57 l2,-1.4 M1461,60 l2,-0.8"/></g>
<rect x="1478" y="42.4" width="161" height="31.7" rx="4" fill="#efefef"/>
<text x="1488.2" y="63.2" font-family="Liberation Sans, sans-serif" font-size="15" fill="#333" font-weight="normal" font-style="normal" text-anchor="start" textLength="86" lengthAdjust="spacingAndGlyphs" >Search tools...</text>
<rect x="1578.5" y="50.5" width="33" height="17.5" rx="2.5" fill="#f7f7f7" stroke="#9a9a9a" stroke-width="1"/><rect x="1612.8" y="50.5" width="16" height="17.5" rx="2.5" fill="#f7f7f7" stroke="#9a9a9a" stroke-width="1"/>
<text x="1595" y="63" font-family="Liberation Sans, sans-serif" font-size="11" fill="#444" font-weight="normal" font-style="normal" text-anchor="middle" textLength="27" lengthAdjust="spacingAndGlyphs" >alt/⌥</text>
<text x="1620.8" y="63" font-family="Liberation Sans, sans-serif" font-size="11" fill="#444" font-weight="normal" font-style="normal" text-anchor="middle" >c</text>
<g fill="#222"><circle cx="16" cy="92.5" r="3"/><rect x="15.2" y="84" width="1.6" height="2"/><rect x="15.2" y="87" width="1.6" height="2"/><rect x="15.2" y="97" width="1.6" height="2"/><rect x="15.2" y="100" width="1.6" height="2"/></g><path d="M21,98 h7.5 M24.75,94.2 v7.5" stroke="#1a4fa8" stroke-width="2"/>
<path d="M20,121 q8.5,0 8.5,5 q0,5 -8.5,5 q-1.5,0 -3,-0.3 l-5,3.3 l2,-4.3 q-3,-1.5 -3,-3.7 q0,-5 9,-5z" fill="#222"/>
<g fill="none" stroke="#222" stroke-width="1.6"><path d="M24,156 h-11 v15 h12 v-5"/><path d="M15.5,160.5 h6 M15.5,164 h4 M15.5,167.5 h5" stroke-width="1.3"/></g><path d="M20,166 l7,-7 l2,2 l-7,7 l-2.5,0.5z" fill="#222"/>
<g fill="none" stroke="#222" stroke-width="1.7"><circle cx="21" cy="199" r="6.5"/><path d="M19,190.5 h4 M21,190.5 v2 M21,199 l2.5,-3"/></g><path d="M11,197 h4 M12,200 h3 M13,203 h3" stroke="#222" stroke-width="1.2"/>
<circle cx="20" cy="233" r="9" fill="#222"/><path d="M26,239 l4,4 l-5,-1z" fill="#222"/><g transform="translate(20,233)" fill="none" stroke="#fff" stroke-width="1.2"><polygon points="0,-6 5.2,-3 5.2,3 0,6 -5.2,3 -5.2,-3"/><polygon points="0,-3 2.6,-1.5 2.6,1.5 0,3 -2.6,1.5 -2.6,-1.5"/></g>
<line x1="0" y1="251" x2="39" y2="251" stroke="#ddd" stroke-width="1"/>
<g fill="none" stroke="#222" stroke-width="1.6"><rect x="12.5" y="261" width="15" height="16" rx="1"/></g><g stroke="#222" stroke-width="1.2" fill="none"><path d="M14.5,265 l1,1 l2,-2 M14.5,269 l1,1 l2,-2 M14.5,273 l1,1 l2,-2"/><path d="M19.5,265 h6 M19.5,269 h6 M19.5,273 h6" stroke-width="1.8"/></g>
<path d="M11,1060 h16 v3" fill="none" stroke="#222" stroke-width="2.5"/><rect x="11" y="1059" width="6" height="6" fill="#222"/><circle cx="21" cy="1066" r="4.5" fill="#f9f9f9" stroke="#222" stroke-width="2"/><path d="M24.5,1069.5 l3.5,3.5" stroke="#222" stroke-width="2.5"/>
<path d="M51.5,93.5 h14.5 l-5.5,7 v7 l-3.5,-1.5 v-5.5 z" fill="none" stroke="#333" stroke-width="1.2" stroke-linejoin="round"/>
<rect x="79.5" y="84.5" width="157" height="29" rx="3.5" fill="#fff" stroke="#c9c9c9" stroke-width="1"/>
<text x="86" y="105" font-family="Liberation Sans, sans-serif" font-size="14" fill="#8c8c8c" font-weight="normal" font-style="italic" text-anchor="start" textLength="122.7" lengthAdjust="spacingAndGlyphs" >Filter by name or type</text>
<text x="44.5" y="134.7" font-family="Liberation Sans, sans-serif" font-size="13.5" fill="#333" font-weight="normal" font-style="normal" text-anchor="start" textLength="78.6" lengthAdjust="spacingAndGlyphs" stroke="#333" stroke-width="0.35">Features (19)</text>
<path d="M146.5,124 h5 l1.5,2 h10.5 v10.5 h-17 z" fill="none" stroke="#999" stroke-width="1"/><path d="M148,132 h7 M151.5,128.5 v7" stroke="#6a8fd6" stroke-width="1.8"/>
<rect x="178.8" y="123.3" width="4" height="13.7" fill="#888"/><rect x="187.3" y="123.3" width="4" height="13.7" fill="#888"/>
<g fill="none" stroke="#222" stroke-width="1.8"><circle cx="215" cy="131" r="6.8"/><path d="M212,121.5 h6 M215,121.5 v2.5 M221,124 l1.5,-1.5"/></g><path d="M214,129 l2.5,3.5" stroke="#222" stroke-width="1.5"/>
<rect x="40" y="301" width="200" height="24" fill="#b1d8f0"/>
<path d="M44.5,154.1 l5.5,5.5 l5.5,-5.5" fill="none" stroke="#444" stroke-width="2.1"/>
<text x="63.6" y="161.6" font-family="Liberation Sans, sans-serif" font-size="13" fill="#333" font-weight="normal" font-style="normal" text-anchor="start" textLength="101.2" lengthAdjust="spacingAndGlyphs" >Default geometry</text>
<circle cx="72.5" cy="183.1" r="3.3" fill="none" stroke="#777" stroke-width="0.9"/><circle cx="72.5" cy="183.1" r="1.5" fill="#777"/>
<text x="86" y="187.6" font-family="Liberation Sans, sans-serif" font-size="13" fill="#333" font-weight="normal" font-style="normal" text-anchor="start" textLength="33.6" lengthAdjust="spacingAndGlyphs" >Origin</text>
<path d="M66,201.79999999999998 L79.9,204.29999999999998 V216.29999999999998 L66,214.0 Z" fill="#e2e2e2" stroke="#555" stroke-width="1.1" stroke-linejoin="round"/><path d="M73,203.6 L79.3,204.79999999999998 V210.6 L73,209.5 Z" fill="#ececec"/><path d="M72.4,202.9 V210.2 L79.9,211.5" fill="none" stroke="#555" stroke-width="1"/>
<text x="86" y="213.6" font-family="Liberation Sans, sans-serif" font-size="13" fill="#333" font-weight="normal" font-style="normal" text-anchor="start" >Top</text>
<path d="M66,227.79999999999998 L79.9,230.29999999999998 V242.29999999999998 L66,240.0 Z" fill="#e2e2e2" stroke="#555" stroke-width="1.1" stroke-linejoin="round"/><path d="M73,229.6 L79.3,230.79999999999998 V236.6 L73,235.5 Z" fill="#ececec"/><path d="M72.4,228.9 V236.2 L79.9,237.5" fill="none" stroke="#555" stroke-width="1"/>
<text x="86" y="239.6" font-family="Liberation Sans, sans-serif" font-size="13" fill="#333" font-weight="normal" font-style="normal" text-anchor="start" >Front</text>
<path d="M66,253.8 L79.9,256.3 V268.3 L66,266.0 Z" fill="#e2e2e2" stroke="#555" stroke-width="1.1" stroke-linejoin="round"/><path d="M73,255.60000000000002 L79.3,256.8 V262.6 L73,261.5 Z" fill="#ececec"/><path d="M72.4,254.90000000000003 V262.20000000000005 L79.9,263.5" fill="none" stroke="#555" stroke-width="1"/>
<text x="86" y="265.6" font-family="Liberation Sans, sans-serif" font-size="13" fill="#333" font-weight="normal" font-style="normal" text-anchor="start" >Right</text>
<path d="M47,281.1 l5,5.5 l-5,5.5" fill="none" stroke="#444" stroke-width="2.1"/>
<g fill="none" stroke="#aaa" stroke-width="1"><polygon points="73,280.1 80,283.6 80,291.1 73,294.6 66,291.1 66,283.6"/><path d="M66,283.6 l7,3.5 l7,-3.5 M73,287.1 v7.5"/></g>
<text x="86.2" y="291.6" font-family="Liberation Sans, sans-serif" font-size="13" fill="#999" font-weight="normal" font-style="normal" text-anchor="start" textLength="67.5" lengthAdjust="spacingAndGlyphs" >Origin Cube</text>
<path d="M46,320.1 l1.5,-4.5 l10,-10 l3,3 l-10,10 z M47.5,315.6 l3,3" fill="none" stroke="#666" stroke-width="1"/><path d="M45,321.1 h6" stroke="#999" stroke-width="1"/><circle cx="58.5" cy="318.6" r="5.6" fill="#1a50b5"/><rect x="55.2" y="317.6" width="6.6" height="2.2" fill="#fff"/>
<text x="66.3" y="317.6" font-family="Liberation Sans, sans-serif" font-size="13" fill="#222" font-weight="bold" font-style="normal" text-anchor="start" textLength="88" lengthAdjust="spacingAndGlyphs" >Layout Sketch</text>
<path d="M44.5,336.1 l5.5,5.5 l5.5,-5.5" fill="none" stroke="#444" stroke-width="2.1"/>
<path d="M65.5,332.6 h5 l1.5,1.5 h8.5 v10.5 h-15 z" fill="none" stroke="#777" stroke-width="1"/>
<text x="86.2" y="343.6" font-family="Liberation Sans, sans-serif" font-size="13" fill="#333" font-weight="normal" font-style="normal" text-anchor="start" textLength="55.4" lengthAdjust="spacingAndGlyphs" >Plates (4)</text>
<path d="M67.3,368.70000000000005 L76.4,359.5 L79.2,362.3 L70.1,371.5 Z M67.3,368.70000000000005 L66.2,371.70000000000005 L70.1,371.5" fill="#fff" stroke="#a0a0a0" stroke-width="1.1" stroke-linejoin="round"/><path d="M65.2,371.70000000000005 H79.9" stroke="#a9a9d4" stroke-width="1.2"/>
<text x="86" y="369.6" font-family="Liberation Sans, sans-serif" font-size="13" fill="#9a9a9a" font-weight="normal" font-style="italic" text-anchor="start" textLength="73.7" lengthAdjust="spacingAndGlyphs" >Plate Sketch</text>
<path d="M65.2,383.20000000000005 H77.7 L79.6,385.20000000000005 V397.5 H67.2 L65.2,395.6 Z" fill="#fff" stroke="#a5a5a5" stroke-width="1.1" stroke-linejoin="round"/><path d="M67.2,385.20000000000005 H77.7 M67.2,385.20000000000005 V397.5" stroke="#cfcfcf" stroke-width="0.9" fill="none"/><rect x="70.1" y="387.90000000000003" width="9.5" height="9.6" fill="#c9c9c9" stroke="#a5a5a5" stroke-width="1"/><path d="M72.5,389.90000000000003 H78.5 M73.5,391.1 V396.6 M76,391.1 V396.6" stroke="#b9b9b9" stroke-width="0.7"/>
<text x="86" y="395.6" font-family="Liberation Sans, sans-serif" font-size="13" fill="#9a9a9a" font-weight="normal" font-style="italic" text-anchor="start" >Plate Extrude</text>
<path d="M67.3,420.70000000000005 L76.4,411.5 L79.2,414.3 L70.1,423.5 Z M67.3,420.70000000000005 L66.2,423.70000000000005 L70.1,423.5" fill="#fff" stroke="#a0a0a0" stroke-width="1.1" stroke-linejoin="round"/><path d="M65.2,423.70000000000005 H79.9" stroke="#a9a9d4" stroke-width="1.2"/>
<text x="86" y="421.6" font-family="Liberation Sans, sans-serif" font-size="13" fill="#9a9a9a" font-weight="normal" font-style="italic" text-anchor="start" textLength="138.7" lengthAdjust="spacingAndGlyphs" >Top Plate Sketch w/ M...</text>
<path d="M65.2,435.20000000000005 H77.7 L79.6,437.20000000000005 V449.5 H67.2 L65.2,447.6 Z" fill="#fff" stroke="#a5a5a5" stroke-width="1.1" stroke-linejoin="round"/><path d="M67.2,437.20000000000005 H77.7 M67.2,437.20000000000005 V449.5" stroke="#cfcfcf" stroke-width="0.9" fill="none"/><rect x="70.1" y="439.90000000000003" width="9.5" height="9.6" fill="#c9c9c9" stroke="#a5a5a5" stroke-width="1"/><path d="M72.5,441.90000000000003 H78.5 M73.5,443.1 V448.6 M76,443.1 V448.6" stroke="#b9b9b9" stroke-width="0.7"/>
<text x="86" y="447.6" font-family="Liberation Sans, sans-serif" font-size="13" fill="#9a9a9a" font-weight="normal" font-style="italic" text-anchor="start" >Top Plate Extrude</text>
<path d="M44.5,466.1 l5.5,5.5 l5.5,-5.5" fill="none" stroke="#444" stroke-width="2.1"/>
<path d="M65.5,462.6 h5 l1.5,1.5 h8.5 v10.5 h-15 z" fill="none" stroke="#777" stroke-width="1"/>
<text x="86.2" y="473.6" font-family="Liberation Sans, sans-serif" font-size="13" fill="#333" font-weight="normal" font-style="normal" text-anchor="start" textLength="54.1" lengthAdjust="spacingAndGlyphs" >Tubes (3)</text>
<path d="M67.3,498.70000000000005 L76.4,489.5 L79.2,492.3 L70.1,501.5 Z M67.3,498.70000000000005 L66.2,501.70000000000005 L70.1,501.5" fill="#fff" stroke="#a0a0a0" stroke-width="1.1" stroke-linejoin="round"/><path d="M65.2,501.70000000000005 H79.9" stroke="#a9a9d4" stroke-width="1.2"/>
<text x="86" y="499.6" font-family="Liberation Sans, sans-serif" font-size="13" fill="#9a9a9a" font-weight="normal" font-style="italic" text-anchor="start" >Tube Sketch</text>
<path d="M65.2,513.2 H77.7 L79.6,515.2 V527.5 H67.2 L65.2,525.6 Z" fill="#fff" stroke="#a5a5a5" stroke-width="1.1" stroke-linejoin="round"/><path d="M67.2,515.2 H77.7 M67.2,515.2 V527.5" stroke="#cfcfcf" stroke-width="0.9" fill="none"/><rect x="70.1" y="517.9" width="9.5" height="9.6" fill="#c9c9c9" stroke="#a5a5a5" stroke-width="1"/><path d="M72.5,519.9 H78.5 M73.5,521.1 V526.6 M76,521.1 V526.6" stroke="#b9b9b9" stroke-width="0.7"/>
<text x="86" y="525.6" font-family="Liberation Sans, sans-serif" font-size="13" fill="#9a9a9a" font-weight="normal" font-style="italic" text-anchor="start" >Tube Extrude</text>
<path d="M65,541.1 l4,-2 h8 l3,2 v12 l-3,2 h-8 l-4,-2 z" fill="#ddd" stroke="#999" stroke-width="1"/><path d="M68,543.1 v3 M71,543.1 v3 M68,548.1 v3 M71,548.1 v3" stroke="#fff" stroke-width="2"/>
<text x="86" y="551.6" font-family="Liberation Sans, sans-serif" font-size="13" fill="#9a9a9a" font-weight="normal" font-style="italic" text-anchor="start" >1x1 Convert</text>
<path d="M44.5,570.1 l5.5,5.5 l5.5,-5.5" fill="none" stroke="#444" stroke-width="2.1"/>
<path d="M65.5,566.6 h5 l1.5,1.5 h8.5 v10.5 h-15 z" fill="none" stroke="#777" stroke-width="1"/>
<text x="86.2" y="577.6" font-family="Liberation Sans, sans-serif" font-size="13" fill="#333" font-weight="normal" font-style="normal" text-anchor="start" >Motor Spacer (2)</text>
<path d="M67.3,602.7 L76.4,593.5 L79.2,596.3000000000001 L70.1,605.5 Z M67.3,602.7 L66.2,605.7 L70.1,605.5" fill="#fff" stroke="#a0a0a0" stroke-width="1.1" stroke-linejoin="round"/><path d="M65.2,605.7 H79.9" stroke="#a9a9d4" stroke-width="1.2"/>
<text x="86" y="603.6" font-family="Liberation Sans, sans-serif" font-size="13" fill="#9a9a9a" font-weight="normal" font-style="italic" text-anchor="start" >Motor Spacer Sketch</text>
<path d="M65.2,617.2 H77.7 L79.6,619.2 V631.5 H67.2 L65.2,629.6 Z" fill="#fff" stroke="#a5a5a5" stroke-width="1.1" stroke-linejoin="round"/><path d="M67.2,619.2 H77.7 M67.2,619.2 V631.5" stroke="#cfcfcf" stroke-width="0.9" fill="none"/><rect x="70.1" y="621.9" width="9.5" height="9.6" fill="#c9c9c9" stroke="#a5a5a5" stroke-width="1"/><path d="M72.5,623.9 H78.5 M73.5,625.1 V630.6 M76,625.1 V630.6" stroke="#b9b9b9" stroke-width="0.7"/>
<text x="86" y="629.6" font-family="Liberation Sans, sans-serif" font-size="13" fill="#9a9a9a" font-weight="normal" font-style="italic" text-anchor="start" >Motor Mount Spacer</text>
<path d="M44.5,648.1 l5.5,5.5 l5.5,-5.5" fill="none" stroke="#444" stroke-width="2.1"/>
<path d="M65.5,644.6 h5 l1.5,1.5 h8.5 v10.5 h-15 z" fill="none" stroke="#777" stroke-width="1"/>
<text x="86.2" y="655.6" font-family="Liberation Sans, sans-serif" font-size="13" fill="#333" font-weight="normal" font-style="normal" text-anchor="start" >Belts (4)</text>
<text x="72.5" y="682.1" font-family="Liberation Serif" font-size="15" font-style="italic" font-weight="bold" fill="#999" text-anchor="middle">(x)</text>
<text x="86" y="681.6" font-family="Liberation Sans, sans-serif" font-size="13" fill="#9a9a9a" font-weight="normal" font-style="italic" text-anchor="start" textLength="134.6" lengthAdjust="spacingAndGlyphs" >#Belt_Distance = (7/1...</text>
<circle cx="72" cy="702.1" r="4" fill="none" stroke="#bbb" stroke-width="1"/>
<text x="86" y="707.6" font-family="Liberation Sans, sans-serif" font-size="13" fill="#9a9a9a" font-weight="normal" font-style="italic" text-anchor="start" >Motor Belt</text>
<g stroke="#d4d4d4" stroke-width="1"><line x1="49.5" y1="170" x2="49.5" y2="274"/><line x1="45" y1="274" x2="54" y2="274"/><line x1="49.5" y1="352" x2="49.5" y2="455.6"/><line x1="45" y1="455.6" x2="54" y2="455.6"/><line x1="49.5" y1="482" x2="49.5" y2="560"/><line x1="45" y1="560" x2="54" y2="560"/><line x1="49.5" y1="586" x2="49.5" y2="638"/><line x1="45" y1="638" x2="54" y2="638"/><line x1="49.5" y1="664" x2="49.5" y2="703"/></g>
<g fill="#222"><circle cx="200" cy="287" r="2.6"/><rect x="199.3" y="277" width="1.5" height="2"/><rect x="199.3" y="280.5" width="1.5" height="2"/><rect x="199.3" y="291.5" width="1.5" height="2"/><rect x="199.3" y="295" width="1.5" height="2"/></g>
<g fill="#222"><circle cx="200" cy="547" r="2.6"/><rect x="199.3" y="537" width="1.5" height="2"/><rect x="199.3" y="540.5" width="1.5" height="2"/><rect x="199.3" y="551.5" width="1.5" height="2"/><rect x="199.3" y="555" width="1.5" height="2"/></g>
<g fill="#222"><circle cx="200" cy="702" r="2.6"/><rect x="199.3" y="692" width="1.5" height="2"/><rect x="199.3" y="695.5" width="1.5" height="2"/></g>
<rect x="40" y="704" width="204" height="50" fill="#fff"/>
<line x1="40" y1="703.5" x2="240" y2="703.5" stroke="#cfcfcf" stroke-width="1"/>
<path d="M44.5,714 l5.5,5.5 l5.5,-5.5" fill="none" stroke="#444" stroke-width="2.1"/>
<text x="63.6" y="721.8" font-family="Liberation Sans, sans-serif" font-size="13" fill="#333" font-weight="normal" font-style="normal" text-anchor="start" textLength="48.4" lengthAdjust="spacingAndGlyphs" >Parts (1)</text>
<path d="M65,742 l3,-2 h4 v-4 l3,-1.5 h4 v12 l-3,3 h-11 z M65,742 h11 v8 M76,742 l3,-2 M72,740 v-4" fill="none" stroke="#555" stroke-width="1"/>
<text x="85.6" y="747.3" font-family="Liberation Sans, sans-serif" font-size="13" fill="#333" font-weight="normal" font-style="normal" text-anchor="start" textLength="67" lengthAdjust="spacingAndGlyphs" >Origin Cube</text>
<rect x="245.5" y="538.5" width="32" height="33" fill="#fff" stroke="#9a9a9a" stroke-width="1"/><line x1="245.5" y1="539.5" x2="245.5" y2="570.5" stroke="#fff" stroke-width="1.5"/>
<path d="M252.2,547.5 l3,3 l3,-3" fill="none" stroke="#333" stroke-width="1.3"/><line x1="255" y1="552" x2="255" y2="564.5" stroke="#888" stroke-width="1.6"/><path d="M260,548.5 h9.5 M257,553.5 h12.5 M257,558.5 h12.5 M257,563.5 h12.5" stroke="#222" stroke-width="1.3"/>
<rect x="422.3" y="79.4" width="27.4" height="27.8" fill="#11a00f"/><path d="M428.5,93 l5,5 l9.5,-9.5" fill="none" stroke="#fff" stroke-width="3"/>
<path d="M458.5,89 l10.5,10.5 M469,89 l-10.5,10.5" stroke="#d42a34" stroke-width="2.8"/>
<text x="264.4" y="97.9" font-family="Liberation Sans, sans-serif" font-size="13" fill="#333" font-weight="bold" font-style="normal" text-anchor="start" textLength="82.7" lengthAdjust="spacingAndGlyphs" >Layout Sketch</text>
<line x1="258.5" y1="107.5" x2="477.8" y2="107.5" stroke="#dcdcdc" stroke-width="1"/>
<rect x="261.5" y="113.8" width="187" height="43" fill="#fff" stroke="#cfcfcf" stroke-width="1"/>
<text x="267.2" y="128.4" font-family="Liberation Sans, sans-serif" font-size="10" fill="#555" font-weight="normal" font-style="normal" text-anchor="start" textLength="57.7" lengthAdjust="spacingAndGlyphs" >Sketch plane</text>
<text x="268.3" y="150.1" font-family="Liberation Sans, sans-serif" font-size="13" fill="#555" font-weight="normal" font-style="normal" text-anchor="start" textLength="90.4" lengthAdjust="spacingAndGlyphs" >Mate connector</text>
<g fill="none" stroke="#999" stroke-width="1"><circle cx="415" cy="146.5" r="6.5"/><circle cx="415" cy="146.5" r="4.8"/></g><path d="M415,142 v4.5 h4.5" fill="none" stroke="#999" stroke-width="1"/>
<path d="M429.3,142.5 l7.5,7.5 M436.8,142.5 l-7.5,7.5" stroke="#555" stroke-width="1.2"/>
<g fill="none" stroke="#333" stroke-width="1.3"><circle cx="462.2" cy="126.2" r="8.5"/><circle cx="462.2" cy="126.2" r="6.2"/></g><path d="M462.2,120 v6.2 h6" fill="none" stroke="#333" stroke-width="1.3"/>
<rect x="262.3" y="170.89999999999998" width="11" height="10.6" rx="2" fill="#fff" stroke="#555" stroke-width="1"/>
<text x="278.8" y="181.39999999999998" font-family="Liberation Sans, sans-serif" font-size="13" fill="#555" font-weight="normal" font-style="normal" text-anchor="start" textLength="105.4" lengthAdjust="spacingAndGlyphs" >Disable imprinting</text>
<rect x="262.3" y="197.89999999999998" width="11" height="10.6" rx="2" fill="#fff" stroke="#555" stroke-width="1"/>
<text x="278.8" y="208.39999999999998" font-family="Liberation Sans, sans-serif" font-size="13" fill="#555" font-weight="normal" font-style="normal" text-anchor="start" textLength="100.1" lengthAdjust="spacingAndGlyphs" >Show constraints</text>
<rect x="261.8" y="225.1" width="12" height="11.6" rx="2" fill="#1a56c2"/><path d="M264.5,230.9 l2.3,2.3 l4.5,-4.5" fill="none" stroke="#fff" stroke-width="1.6"/>
<text x="278.8" y="236.1" font-family="Liberation Sans, sans-serif" font-size="13" fill="#555" font-weight="normal" font-style="normal" text-anchor="start" textLength="104.5" lengthAdjust="spacingAndGlyphs" >Show expressions</text>
<rect x="261.8" y="251.8" width="12" height="11.6" rx="2" fill="#1a56c2"/><path d="M264.5,257.6 l2.3,2.3 l4.5,-4.5" fill="none" stroke="#fff" stroke-width="1.6"/>
<text x="278.8" y="262.8" font-family="Liberation Sans, sans-serif" font-size="13" fill="#555" font-weight="normal" font-style="normal" text-anchor="start" textLength="70.5" lengthAdjust="spacingAndGlyphs" >Show errors</text>
<rect x="378" y="274.5" width="20.5" height="21" rx="2.5" fill="#fff" stroke="#9a9a9a" stroke-width="1"/><circle cx="388.2" cy="284.8" r="7" fill="none" stroke="#333" stroke-width="1.2"/><path d="M383,291 l8,-10 l1.8,1.8 l-8,9.5" fill="none" stroke="#333" stroke-width="1"/><path d="M383.5,289.5 h9" stroke="#3567c7" stroke-width="1.2"/><path d="M393,290 l3,3" stroke="#333" stroke-width="1.2"/>
<rect x="403.5" y="274.5" width="47.7" height="21" rx="2.5" fill="#fff" stroke="#9a9a9a" stroke-width="1"/>
<text x="414.2" y="289.5" font-family="Liberation Sans, sans-serif" font-size="13" fill="#333" font-weight="normal" font-style="normal" text-anchor="start" textLength="26.1" lengthAdjust="spacingAndGlyphs" >Final</text>
<circle cx="466.8" cy="287.9" r="6" fill="#9b9b9b"/>
<text x="466.8" y="291.8" font-family="Liberation Sans, sans-serif" font-size="10" fill="#fff" font-weight="bold" font-style="normal" text-anchor="middle" >?</text>
<polygon points="1823,100.9 1837.3,100.9 1830.1,90.8" fill="#9a9a9a"/>
<polygon points="1823,231 1837.3,231 1830.1,241" fill="#9a9a9a"/>
<polygon points="1765,158.4 1765,173.4 1755,165.9" fill="#9a9a9a"/>
<polygon points="1895.2,158.4 1895.2,173.4 1905.2,165.9" fill="#9a9a9a"/>
<path d="M1809,101 Q1790,106 1781.5,118" fill="none" stroke="#9a9a9a" stroke-width="4.2"/><polygon points="1775.9,125 1776.5,113.5 1787.5,123.5" fill="#9a9a9a"/>
<path d="M1851,101 Q1870,106 1878.5,118" fill="none" stroke="#9a9a9a" stroke-width="4.2"/><polygon points="1883.8,125 1883.2,113.5 1872.2,123.5" fill="#9a9a9a"/>
<path d="M1812,137 h36 l10.2,11 v36 l-10.2,11 h-36 l-10.2,-11 v-36 z" fill="#eef0f2"/>
<g fill="#e2e5e9"><rect x="1812.2" y="137.1" width="35.7" height="8"/><rect x="1812.2" y="187" width="35.7" height="8"/><rect x="1801.8" y="148.2" width="8" height="35.7"/><rect x="1850.2" y="148.2" width="8" height="35.7"/></g>
<rect x="1808" y="144" width="44" height="44.3" rx="10" fill="#fdfdfd"/>
<text x="1819.3" y="168.9" font-family="Liberation Sans, sans-serif" font-size="14" fill="#333" font-weight="normal" font-style="normal" text-anchor="start" textLength="20.5" lengthAdjust="spacingAndGlyphs" >Top</text>
<line x1="1799.4" y1="137.6" x2="1799.4" y2="196.3" stroke="#3fa83f" stroke-width="1.3"/><line x1="1799.4" y1="196.3" x2="1858.5" y2="196.3" stroke="#d9454f" stroke-width="1.3"/>
<text x="1799.2" y="131.5" font-family="Liberation Sans, sans-serif" font-size="10" fill="#4cb34c" font-weight="normal" font-style="normal" text-anchor="middle" >Y</text>
<text x="1868.5" y="200" font-family="Liberation Sans, sans-serif" font-size="11" fill="#e24b4b" font-weight="normal" font-style="normal" text-anchor="middle" >X</text>
<g stroke="#333" stroke-width="1.1" stroke-linejoin="round"><polygon points="1875.2,222.6 1884.3,226.5 1884.3,237 1875.2,241 1866,237 1866,226.5" fill="#ccc"/><polygon points="1866,226.5 1875.2,230.3 1884.3,226.5 1875.2,222.6" fill="#eee"/><polygon points="1875.2,230.3 1884.3,226.5 1884.3,237 1875.2,241" fill="#e6e6e6"/><polygon points="1866,226.5 1875.2,230.3 1875.2,241 1866,237" fill="#9a9a9a"/></g>
<polygon points="1892,230 1900,230 1896,233.8" fill="#222"/>
<line x1="1888" y1="432.8" x2="1919" y2="432.8" stroke="#bdbdbd" stroke-width="1"/>
<line x1="1888" y1="466.6" x2="1919" y2="466.6" stroke="#bdbdbd" stroke-width="1"/>
<line x1="1888" y1="499" x2="1919" y2="499" stroke="#bdbdbd" stroke-width="1"/>
<line x1="1888" y1="575.9" x2="1919" y2="575.9" stroke="#bdbdbd" stroke-width="1"/>
<line x1="1888" y1="608.9" x2="1919" y2="608.9" stroke="#bdbdbd" stroke-width="1"/>
<line x1="1888" y1="642.3" x2="1919" y2="642.3" stroke="#bdbdbd" stroke-width="1"/>
<line x1="1888" y1="675.1" x2="1919" y2="675.1" stroke="#bdbdbd" stroke-width="1"/>
<path d="M1897.5,421 L1905.3,408.2 L1909,410.5 L1902.5,421 z" fill="#6e6e6e"/><path d="M1900.5,421 L1909.5,411.5 L1913.5,415.5 L1905.5,421 z" fill="#8f8f8f"/><path d="M1903.5,421 L1912,416.5 L1913.5,421 z" fill="#c8c8c8"/>
<rect x="1895.5" y="420.8" width="19" height="6.5" rx="1.5" fill="#fafafa" stroke="#8a8a8a" stroke-width="0.9"/><line x1="1902.5" y1="420.8" x2="1902.5" y2="427.3" stroke="#8a8a8a" stroke-width="0.9"/><rect x="1909" y="421.3" width="5" height="5.5" fill="#d0d0d0"/><circle cx="1899" cy="424" r="1.3" fill="#444"/>
<rect x="1895.2" y="441.3" width="9.5" height="7.2" fill="#1f5fc8"/><g fill="#8fd0ff"><rect x="1896.2" y="442.2" width="2" height="1.6"/><rect x="1899.1" y="442.2" width="2" height="1.6"/><rect x="1902" y="442.2" width="2" height="1.6"/></g><path d="M1895.2,445.5 h9.5 M1895.2,447.3 h9.5" stroke="#fff" stroke-width="0.6"/><g fill="none" stroke="#222" stroke-width="1.1" stroke-linejoin="round"><path d="M1904.7,444.5 L1913.8,448 V456.5 L1906.5,459.5 L1899,456.5 V448.5"/><path d="M1899,448.5 L1906.5,451.5 L1913.8,448 M1906.5,451.5 V459.5"/></g>
<rect x="1895" y="475" width="9" height="7" fill="#333"/><path d="M1895,477.3 h9 M1895,479.6 h9 M1898,475 v7 M1901,475 v7" stroke="#fff" stroke-width="0.6"/><g fill="none" stroke="#444" stroke-width="1"><polygon points="1906,479 1912,482 1912,488 1906,491 1900,488 1900,482"/><path d="M1897,481 q-1.5,0 -1.5,2 v2 l-1,1 l1,1 v2 q0,2 1.5,2 M1915,481 q1.5,0 1.5,2 v2 l1,1 l-1,1 v2 q0,2 -1.5,2"/></g>
<rect x="1896" y="508" width="9" height="7" fill="#333"/><path d="M1896,510.3 h9 M1896,512.6 h9 M1899,508 v7 M1902,508 v7" stroke="#fff" stroke-width="0.6"/><text x="1906" y="525" font-family="Liberation Serif" font-size="15" font-style="italic" font-weight="bold" fill="#222" text-anchor="middle">(x)</text>
<rect x="1893.4" y="548" width="23.3" height="23.7" rx="3" fill="#dcdcdc"/><path d="M1905,560 C1902,556 1898,553 1895.8,552.5 C1895.5,556 1897.5,559.5 1901,561.5 C1900,563 1900,565 1901.5,566.5 C1903,566.5 1904.5,565 1905,563 C1905.5,565 1907,566.5 1908.5,566.5 C1910,565 1910,563 1909,561.5 C1912.5,559.5 1914.5,556 1914.2,552.5 C1912,553 1908,556 1905,560 z" fill="#0a0a0a"/><path d="M1898,567 l2,-1 M1912,567 l-2,-1" stroke="#333" stroke-width="0.6"/>
<rect x="1894" y="581" width="22" height="23" rx="2" fill="#e6e6e6"/>
<rect x="1895.3" y="583.3" width="19.3" height="19" fill="#1f6be0" stroke="#0a1f55" stroke-width="1.1"/><text x="1905" y="599" font-family="Liberation Serif" font-size="14" font-weight="bold" fill="#fff" text-anchor="middle" textLength="16" lengthAdjust="spacingAndGlyphs">MK</text>
<rect x="1893" y="613" width="24" height="24" rx="3" fill="#e4e4e4"/><polygon points="1896,622 1914,619 1915,632 1898,635" fill="#222"/><circle cx="1902.5" cy="627" r="3" fill="#fff" stroke="#3a7bd5" stroke-width="1.2"/><circle cx="1909.5" cy="626" r="3" fill="#fff" stroke="#3a7bd5" stroke-width="1.2"/><path d="M1898,617 h12" stroke="#6a7fd8" stroke-width="2"/>
<rect x="1893" y="647" width="24" height="24" rx="3" fill="#e4e4e4"/><rect x="1894.5" y="648.5" width="21" height="21" fill="#4caf50"/><path d="M1897.5,653 q4,-1 7.5,1 q3.5,-2 7.5,-1 v12 q-4,-1 -7.5,1 q-3.5,-2 -7.5,-1z" fill="#fff"/><line x1="1905" y1="654" x2="1905" y2="666" stroke="#4caf50" stroke-width="1"/>
<rect x="1893" y="680" width="24" height="24" rx="3" fill="#e4e4e4"/><rect x="1894.5" y="681.5" width="21" height="21" fill="#1447b5" stroke="#0a2a6a" stroke-width="1"/><path d="M1897.5,686 q4,-1 7.5,1 q3.5,-2 7.5,-1 v12 q-4,-1 -7.5,1 q-3.5,-2 -7.5,-1z" fill="#fff"/><line x1="1905" y1="687" x2="1905" y2="699" stroke="#1447b5" stroke-width="1"/>
<rect x="1809.5" y="1022" width="110" height="27" fill="#fff"/><line x1="1809.5" y1="1040.8" x2="1919" y2="1040.8" stroke="#ececec" stroke-width="1"/>
<g fill="#fff" stroke="#1a1a1a" stroke-width="1.2"><ellipse cx="1832.5" cy="1034" rx="5.3" ry="4"/><path d="M1822.5,1036.5 h14.5 v5 h-14.5 z"/></g><ellipse cx="1832.5" cy="1032.6" rx="2.6" ry="1.4" fill="none" stroke="#1a1a1a" stroke-width="1"/><path d="M1824.8,1041 v-1.5 M1827.5,1041 v-1.5 M1830.2,1041 v-1.5 M1833,1041 v-1.5 M1835.5,1041 v-1.5" stroke="#555" stroke-width="0.7"/>
<path d="M1855.6,1042.2 A9.6,11 0 0 1 1874.4,1042.2 Z" fill="#fff" stroke="#1a1a1a" stroke-width="1.4"/><path d="M1859.8,1041.2 A5.2,6.2 0 0 1 1870.2,1041.2" fill="none" stroke="#1a1a1a" stroke-width="1.2"/><path d="M1858,1041 A7.8,9 0 0 1 1872,1041" fill="none" stroke="#888" stroke-width="0.8" stroke-dasharray="1 1"/>
<g stroke="#1a1a1a" fill="none"><path d="M1894.9,1029.5 h11.7" stroke-width="1.6"/><path d="M1899.8,1029 v12" stroke-width="1.8"/><path d="M1895.3,1030 l-1.8,7.5 M1895.3,1030 l1.8,7.5 M1906.2,1030 l-1.8,7.5 M1906.2,1030 l1.8,7.5" stroke-width="0.8"/><path d="M1893,1037.8 h4.6 M1902.5,1037.8 h5" stroke-width="1.6"/><path d="M1893,1042 h14.2" stroke-width="1.6"/></g>
<rect x="40" y="1050" width="1879" height="29" fill="#d6d6d6"/>
<rect x="40" y="1050" width="33" height="27" fill="#d1d1d1"/>
<path d="M49.2,1064.4 h14.7 M56.55,1057 v14.8" stroke="#555" stroke-width="2.8"/>
<path d="M74,1052 q0,-2 2,-2 h31 l4,13.5 l-4,13.5 h-31 q-2,0 -2,-2 z" fill="#e6e6e6"/>
<path d="M83.5,1063 l8.5,-7.5 l8.5,7.5 v7 h-5 v-4.5 h-7 v4.5 h-5 z" fill="#555"/><rect x="96.5" y="1053.5" width="2.2" height="5" fill="#555"/>
<path d="M109.5,1050 h128 l8,13.5 l-8,13.5 h-128 l4.5,-13.5 z" fill="#fff"/>
<text x="130" y="1068.8" font-family="Liberation Sans, sans-serif" font-size="14" fill="#555" font-weight="normal" font-style="normal" text-anchor="start" textLength="95" lengthAdjust="spacingAndGlyphs" >Exercise 7 - Ver</text>
<path d="M247,1053 q0,-3 3,-3 h196 q2,0 2,2 v25 h-198 q-3,0 -3,-3 z" fill="#e8e8e8"/>
<circle cx="267" cy="1062.5" r="6.9" fill="#6f9fdc"/><circle cx="267" cy="1058.8" r="1.3" fill="#fff"/><rect x="265.8" y="1061" width="2.4" height="6.5" rx="1.2" fill="#fff"/><circle cx="267" cy="1062.5" r="4" fill="none" stroke="#6f9fdc" stroke-width="0"/>
<g stroke="#222" stroke-width="1.1" fill="none" stroke-linejoin="round"><path d="M278.5,1057 l3,-3 h10 l4.5,4.5 v13.5 h-11 l-6.5,-3.5 z"/><path d="M278.5,1057 v11.5 h11.5 v-11.5 z M290,1057 l5.5,1.5 M290,1068.5 l6,3.5"/></g><rect x="279.5" y="1058" width="9.5" height="9.5" fill="#8a8a8a"/>
<text x="300.5" y="1068.8" font-family="Liberation Sans, sans-serif" font-size="14" fill="#555" font-weight="normal" font-style="normal" text-anchor="start" textLength="127" lengthAdjust="spacingAndGlyphs" >Exercise 7 Assembly</text>
<path d="M449.5,1050 h198 q1.5,0 1.5,1.5 v25.5 h-199.5 z" fill="#fff"/>
<rect x="450" y="1076" width="198.5" height="2.4" rx="1" fill="#1d4f9c"/>
<g stroke="#222" stroke-width="1.1" fill="#fff" stroke-linejoin="round"><path d="M461,1059.5 l2,-2 h4 v14.5 h-6 z M461,1059.5 h4 v12.5 M465,1059.5 l2,-2"/><path d="M470,1056 l2,-2 h4 l1.5,2 v15.5 l-1.5,0.5 h-6 z M470,1056 h5.5 v16 M475.5,1056 l2,-2"/></g>
<text x="482" y="1068.8" font-family="Liberation Sans, sans-serif" font-size="14" fill="#333" font-weight="normal" font-style="normal" text-anchor="start" textLength="135.5" lengthAdjust="spacingAndGlyphs" >Exercise 7 Part Studio</text>
</svg>
</body></html>
